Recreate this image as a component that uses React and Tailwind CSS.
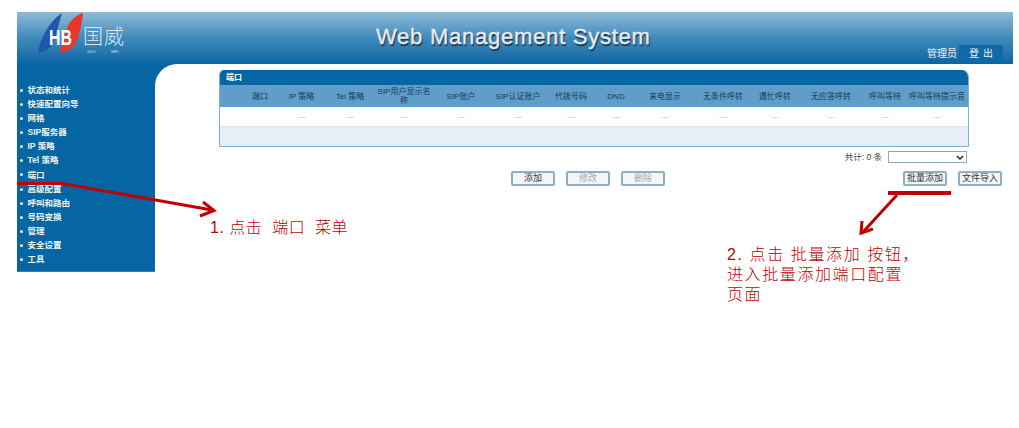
const menu = ["状态和统计","快速配置向导","网格","SIP服务器","IP 策略","Tel 策略","端口","高级配置","呼叫和路由","号码变换","管理","安全设置","工具"];
const cols = ["端口","IP 策略","Tel 策略","SIP用户显示名称","SIP账户","SIP认证账户","代拨号码","DND","来电显示","无条件呼转","遇忙呼转","无应答呼转","呼叫等待","呼叫等待提示音"];
const sans = "font-['Liberation_Sans','Noto_Sans_CJK_SC',sans-serif]";
const grid = "grid grid-cols-[22px_36px_47px_50px_58px_56px_58px_48px_42px_56px_60px_44px_68px_40px_64px]";

function Btn({ children, disabled }) {
  return (
    <button className={`w-[44px] h-[15px] flex items-center justify-center rounded-[2px] border-2 border-[#8fb0c4] bg-[#f4f5f6] text-[9px] leading-none ${disabled ? "text-[#a8a8a8]" : "text-[#333]"}`}>
      {children}
    </button>
  );
}

function Logo() {
  return (
    <div className="relative w-[90px] h-[44px] shrink-0">
      <svg width="50" height="42" viewBox="0 0 50 42" className="absolute left-0 top-0">
        <path d="M0 40C2 28 9 10 24 0C21 10 19 18 16 28C13 35 7 40 0 40Z" fill="#1f57ad" />
        <path d="M21 40C26 30 27 18 31 11C34 6 39 2 45 0C44 12 41 24 37 31C33 37 27 40 21 40Z" fill="#e5372c" />
        <text x="11" y="32" fontSize="22" fontWeight="700" fill="#ffffff" fontFamily="Liberation Sans" textLength="23" lengthAdjust="spacingAndGlyphs">HB</text>
      </svg>
      <span className="absolute left-[45px] top-[13px] text-[20px] leading-[20px] tracking-[1px] text-[#dbe8f1] font-['Noto_Sans_CJK_SC',sans-serif] font-light whitespace-nowrap">国威</span>
      <span className="absolute left-[49px] top-[36px] text-[4px] leading-[5px] text-[#cfe0ec] whitespace-nowrap">GUO</span>
      <span className="absolute left-[73px] top-[36px] text-[4px] leading-[5px] text-[#cfe0ec] whitespace-nowrap">WEI</span>
    </div>
  );
}

export default function App() {
  return (
    <div className={`relative w-[1019px] h-[428px] bg-white overflow-hidden ${sans}`}>
      <div className="ml-[17px] pt-[12px] w-[996px]">
        <header className="flex h-[52px] bg-gradient-to-b from-[#8dbbd8] via-[#3f8abc] to-[#0566a3]">
          <div className="ml-[21px] mt-[1px]"><Logo /></div>
          <h1 className="ml-[248px] mt-[12px] text-[22px] leading-[26px] text-[#e6eaee] whitespace-nowrap tracking-[0.75px] [-webkit-text-stroke:0.4px_#e6eaee] [text-shadow:1px_2px_1px_#1c2f3e]">Web Management System</h1>
          <div className="ml-auto mr-[10px] mt-[33px] flex items-center h-[17px] text-[10px] text-[#e8f0f5]">
            <span className="mr-[2px]">管理员</span>
            <span className="w-[44px] h-[17px] flex items-center justify-center gap-[4px] bg-[#0f6aa5]"><span>登</span><span>出</span></span>
          </div>
        </header>
        <div className="flex h-[208px] bg-[#0566a3]">
          <nav className="w-[138px] shrink-0 pt-[19px] border-b border-[#2f86bb]">
            {menu.map((m) => (
              <div key={m} className="flex items-center h-[14.15px] pl-[3px] text-[8.5px] font-bold text-[#eef4ee] whitespace-nowrap">
                <span className="w-[3px] h-[3px] rounded-full bg-[#f3f1a8] mr-[4.5px]" />
                {m}
              </div>
            ))}
          </nav>
          <main className="flex-1 bg-white rounded-tl-[22px] min-h-[208px]">
            <div className="ml-[64px] mt-[6px] w-[750px] rounded-tr-[7px] rounded-tl-[5px] overflow-hidden border-x border-b border-[#7fb0cb]">
              <div className="h-[15px] bg-[#0566a3] text-white text-[8px] font-bold leading-[15px] pl-[6px]">端口</div>
              <div className={`${grid} h-[22px] bg-[#5f9dca] items-center text-[8px] leading-[9px] text-[#1d3b52] text-center`}>
                <span />
                {cols.map((c) => <span key={c} className="px-[1px]">{c}</span>)}
              </div>
              <div className={`${grid} h-[20px] bg-white items-center text-[8px] text-[#aeb4ba] text-center border-b border-[#dfe5ec]`}>
                <span /><span />
                {cols.slice(1).map((c) => <span key={c}>---</span>)}
              </div>
              <div className="h-[19px] bg-[#e8eef7]" />
            </div>
            <div className="ml-[64px] w-[748px] h-[12px] mt-[4px] flex items-center justify-end text-[8.5px] text-[#444]">
              <span className="mr-[6px]">共计: 0 条</span>
              <div className="relative w-[79px] h-[12px] border border-[#8aa9bc] bg-white">
                <svg width="8" height="5" viewBox="0 0 8 5" className="absolute right-[2px] top-[3px]"><path d="M1 1l3 3 3-3" fill="none" stroke="#222" strokeWidth="1.5" /></svg>
              </div>
            </div>
            <div className="mt-[8px] ml-[356px] flex gap-[11px]">
              <Btn>添加</Btn>
              <Btn disabled>修改</Btn>
              <Btn disabled>删除</Btn>
              <div className="w-[216px]" />
              <Btn>批量添加</Btn>
              <Btn>文件导入</Btn>
            </div>
          </main>
        </div>
      </div>

      <svg width="1019" height="428" className="absolute left-0 top-0 pointer-events-none">
        <path d="M17 183.5H62L212 210" fill="none" stroke="#c00000" strokeWidth="3" />
        <path d="M203 202L214 210.500L200 216" fill="none" stroke="#c00000" strokeWidth="3" />
        <path d="M888 193H951" fill="none" stroke="#c00000" strokeWidth="4" />
        <path d="M897 195L863 232" fill="none" stroke="#c00000" strokeWidth="3" />
        <path d="M862 221L861 233L873 229" fill="none" stroke="#c00000" strokeWidth="3" />
      </svg>
      <div className="absolute left-[210px] top-[218px] text-[16px] leading-[20px] tracking-[0.5px] text-[#c00000] font-['Liberation_Sans','Noto_Sans_CJK_SC',sans-serif] font-light whitespace-pre">1. 点击  端口  菜单</div>
      <div className="absolute left-[727px] top-[245px] text-[16px] leading-[20px] tracking-[1.6px] text-[#c00000] font-['Liberation_Sans','Noto_Sans_CJK_SC',sans-serif] font-light whitespace-pre">{"2. 点击 批量添加 按钮，\n进入批量添加端口配置\n页面"}</div>
    </div>
  );
}
